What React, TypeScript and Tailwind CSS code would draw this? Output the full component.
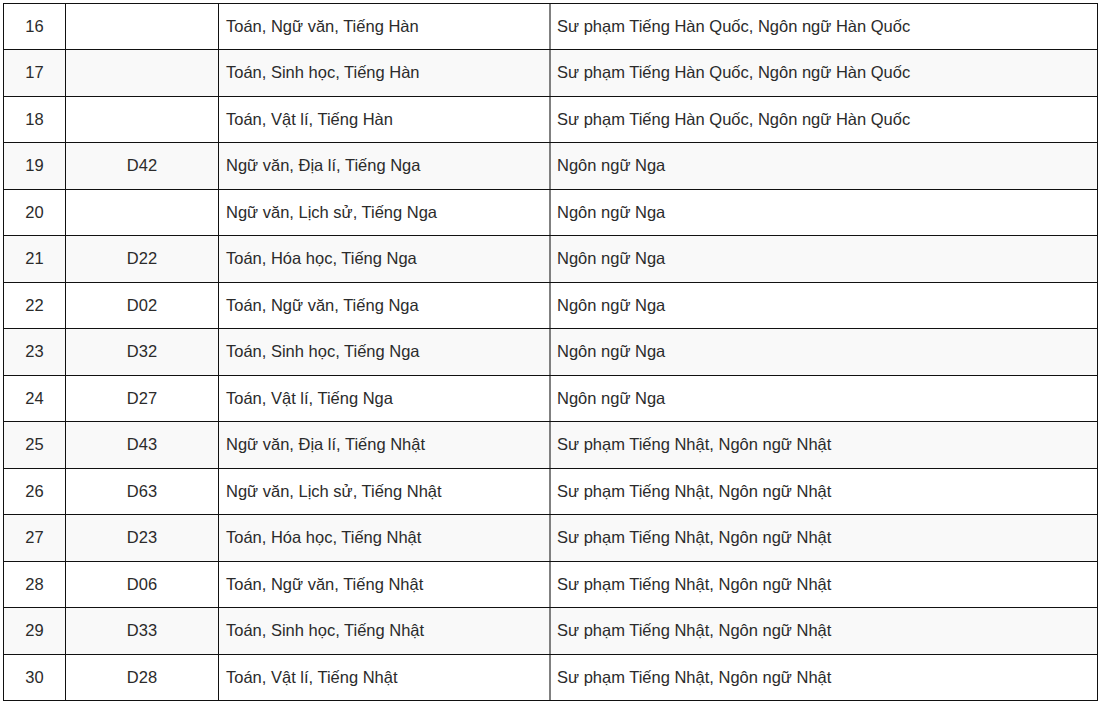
const rows: [string, string, string, string][] = [
  ["16", "", "Toán, Ngữ văn, Tiếng Hàn", "Sư phạm Tiếng Hàn Quốc, Ngôn ngữ Hàn Quốc"],
  ["17", "", "Toán, Sinh học, Tiếng Hàn", "Sư phạm Tiếng Hàn Quốc, Ngôn ngữ Hàn Quốc"],
  ["18", "", "Toán, Vật lí, Tiếng Hàn", "Sư phạm Tiếng Hàn Quốc, Ngôn ngữ Hàn Quốc"],
  ["19", "D42", "Ngữ văn, Địa lí, Tiếng Nga", "Ngôn ngữ Nga"],
  ["20", "", "Ngữ văn, Lịch sử, Tiếng Nga", "Ngôn ngữ Nga"],
  ["21", "D22", "Toán, Hóa học, Tiếng Nga", "Ngôn ngữ Nga"],
  ["22", "D02", "Toán, Ngữ văn, Tiếng Nga", "Ngôn ngữ Nga"],
  ["23", "D32", "Toán, Sinh học, Tiếng Nga", "Ngôn ngữ Nga"],
  ["24", "D27", "Toán, Vật lí, Tiếng Nga", "Ngôn ngữ Nga"],
  ["25", "D43", "Ngữ văn, Địa lí, Tiếng Nhật", "Sư phạm Tiếng Nhật, Ngôn ngữ Nhật"],
  ["26", "D63", "Ngữ văn, Lịch sử, Tiếng Nhật", "Sư phạm Tiếng Nhật, Ngôn ngữ Nhật"],
  ["27", "D23", "Toán, Hóa học, Tiếng Nhật", "Sư phạm Tiếng Nhật, Ngôn ngữ Nhật"],
  ["28", "D06", "Toán, Ngữ văn, Tiếng Nhật", "Sư phạm Tiếng Nhật, Ngôn ngữ Nhật"],
  ["29", "D33", "Toán, Sinh học, Tiếng Nhật", "Sư phạm Tiếng Nhật, Ngôn ngữ Nhật"],
  ["30", "D28", "Toán, Vật lí, Tiếng Nhật", "Sư phạm Tiếng Nhật, Ngôn ngữ Nhật"],
];

export default function App() {
  return (
    <div className="h-[702px] overflow-hidden bg-white pl-[3px] pt-[3px] font-['Liberation_Sans',Arial,sans-serif] text-[16.5px] text-[#2b2b2b]">
      <div className="w-[1095px] border-l border-t border-[#111]">
        {rows.map(([stt, code, subjects, majors], i) => (
          <div
            key={stt}
            className={
              i % 2 === 0
                ? "flex h-[46px] items-center border-b border-[#111] bg-white"
                : "flex h-[47px] items-center border-b border-[#111] bg-[#f9f9f9]"
            }
          >
            <div className="flex h-full w-[62px] items-center justify-center border-r border-[#111] pb-px">{stt}</div>
            <div className="flex h-full w-[153px] items-center justify-center border-r border-[#111] pb-px">{code}</div>
            <div className="flex h-full w-[332px] items-center border-r-2 border-[#808080] pb-px pl-[7px]">{subjects}</div>
            <div className="flex h-full w-[547px] items-center border-r border-[#111] pb-px pl-[6px]">{majors}</div>
          </div>
        ))}
      </div>
    </div>
  );
}
